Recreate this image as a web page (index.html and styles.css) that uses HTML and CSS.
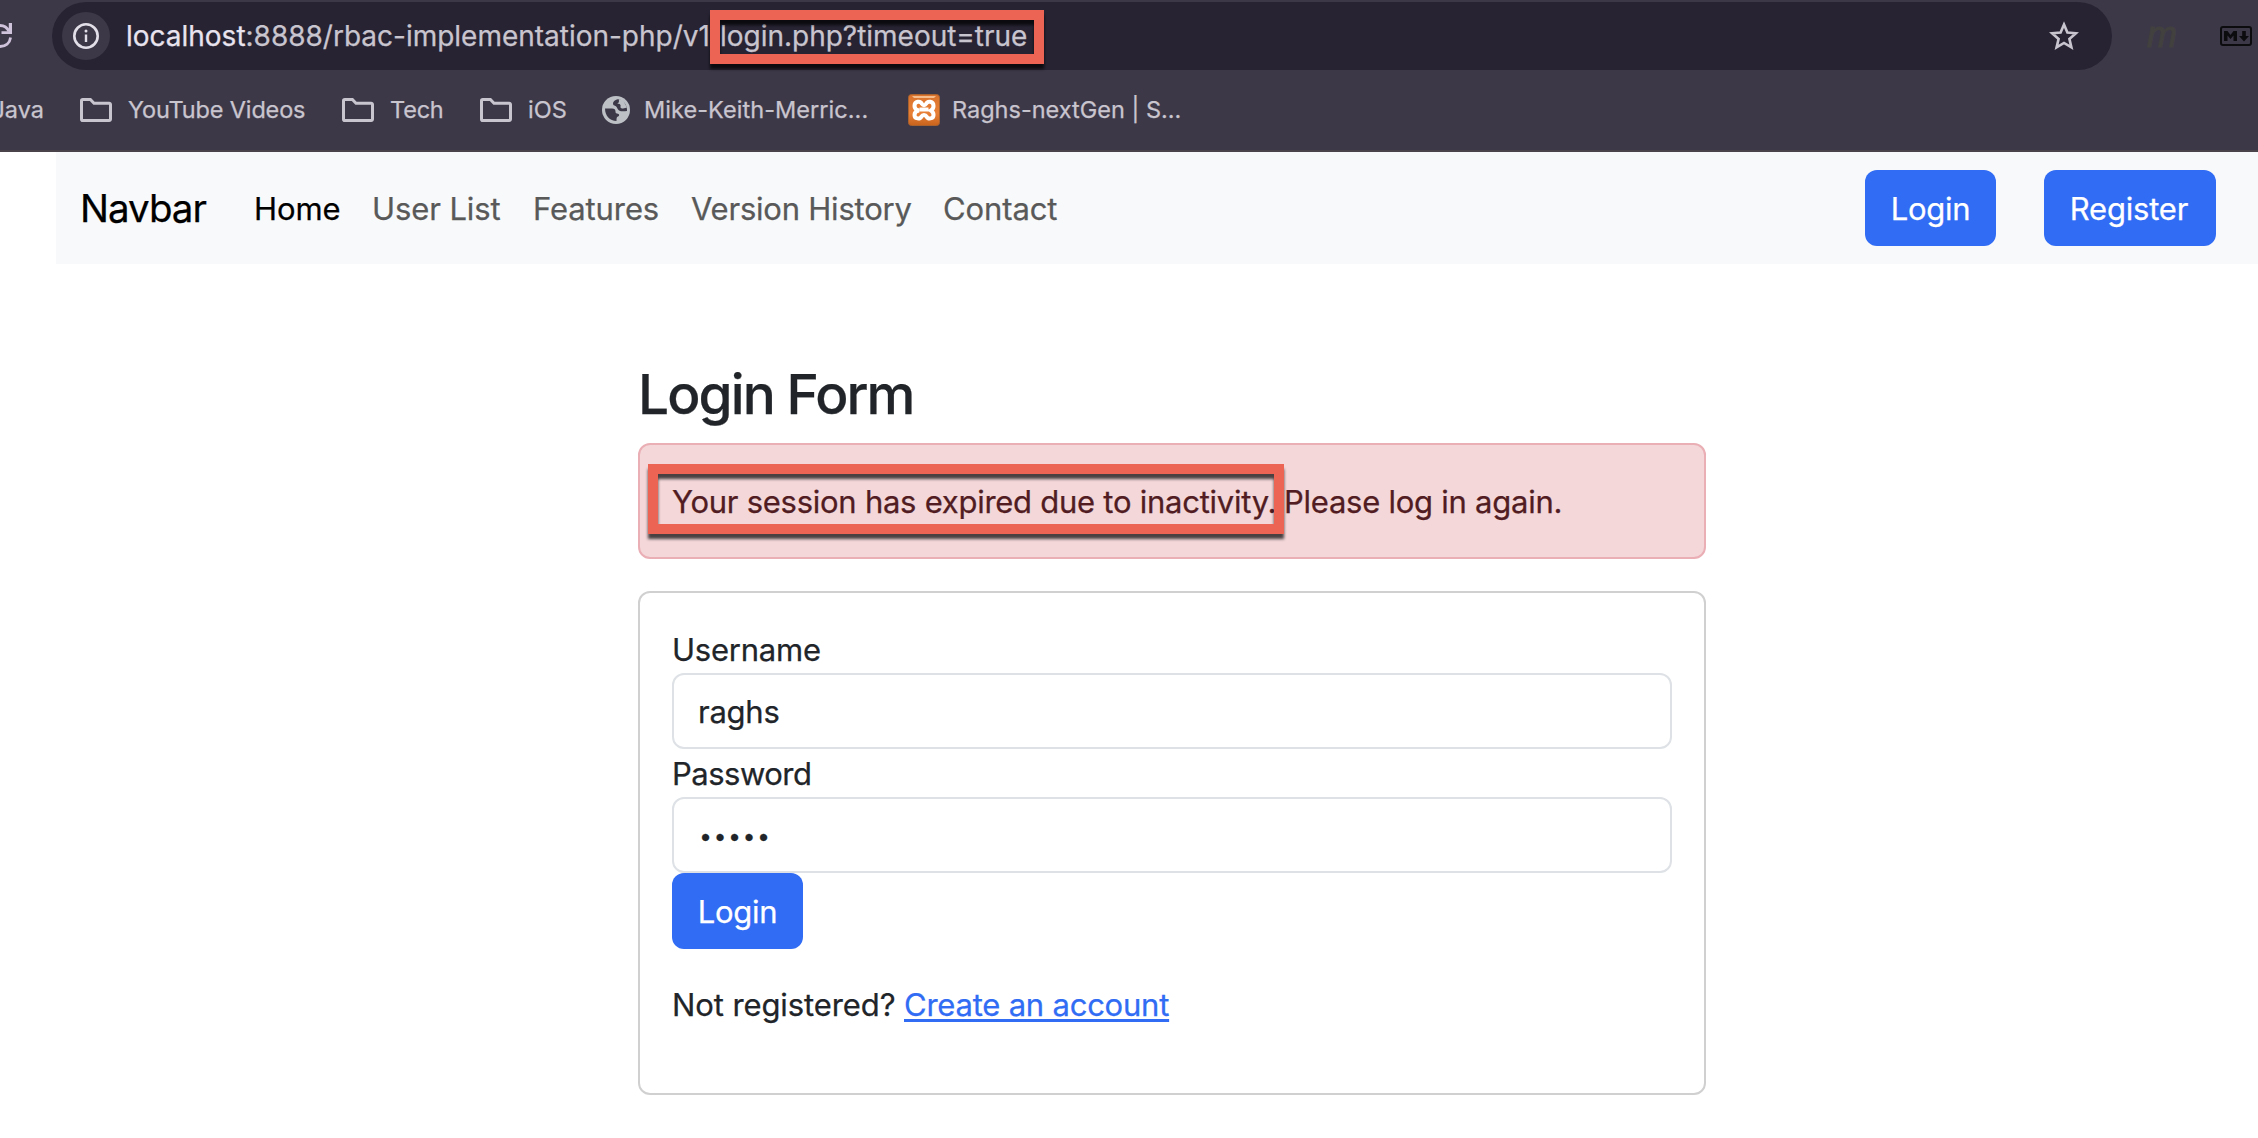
FILE: index.html
```html
<!DOCTYPE html>
<html lang="en">
<head>
<meta charset="utf-8">
<title>Login Form</title>
<link rel="stylesheet" href="styles.css">
</head>
<body>
<header class="browser">
  <div class="toolbar">
    <svg class="reload" viewBox="0 0 14 26"><path d="M0 2.5C4 2.5 7.500 5 9 8.500M0 23.500C5.500 23.500 9.800 20 10.600 14.500" fill="none" stroke="#cfc3dc" stroke-width="2.800"/><path d="M12 0v11H1.500V8.200h7.300V0z" fill="#cfc3dc"/></svg>
    <div class="omnibox">
      <span class="site-info"><svg viewBox="0 0 26 26"><circle cx="13" cy="13" r="11.700" fill="none" stroke="#e3dfe8" stroke-width="2.600"/><path d="M13 11.500v7.500" stroke="#e3dfe8" stroke-width="2.400"/><circle cx="13" cy="8" r="1.500" fill="#e3dfe8"/></svg></span>
      <span class="url"><span class="host">localhost</span><span class="path">:8888/rbac-implementation-php/v1/</span><span class="page">login.php?timeout=true</span></span>
      <svg class="star" viewBox="0 0 30 30"><path d="M15 3.500l3.400 8 8.600.7-6.600 5.700 2 8.500-7.400-4.500-7.400 4.500 2-8.500L3 12.200l8.600-.7z" fill="none" stroke="#c9c5cf" stroke-width="2.600"/></svg>
    </div>
    <span class="ext-m">m</span>
    <svg class="ext-md" viewBox="0 0 32 20"><rect x="1" y="1" width="30" height="18" rx="2" fill="none" stroke="#0c0b0e" stroke-width="2"/><path d="M4 15V5h3.500L10.500 9l3-4H17v10h-3.500V9.500l-3 3.500-3-3.500V15zM22.200 5h3.600v5H29l-5 5.500-5-5.500h3.200z" fill="#0c0b0e"/></svg>
    <i class="mark mark-url"></i>
  </div>
  <nav class="bookmarks">
    <span class="bm java">Java</span>
    <span class="bm bm-yt"><svg class="folder" viewBox="0 0 32 24"><path d="M2.800 1.500h7.600L14 5.200h15.200a1.300 1.300 0 0 1 1.300 1.300v14.700a1.300 1.300 0 0 1-1.300 1.300H2.800a1.300 1.300 0 0 1-1.300-1.300V2.800a1.300 1.300 0 0 1 1.300-1.300z"/></svg><span class="t">YouTube Videos</span></span>
    <span class="bm bm-tech"><svg class="folder" viewBox="0 0 32 24"><path d="M2.800 1.500h7.600L14 5.200h15.200a1.300 1.300 0 0 1 1.300 1.300v14.700a1.300 1.300 0 0 1-1.300 1.300H2.800a1.300 1.300 0 0 1-1.300-1.300V2.800a1.300 1.300 0 0 1 1.300-1.300z"/></svg><span class="t">Tech</span></span>
    <span class="bm bm-ios"><svg class="folder" viewBox="0 0 32 24"><path d="M2.800 1.500h7.600L14 5.200h15.200a1.300 1.300 0 0 1 1.300 1.300v14.700a1.300 1.300 0 0 1-1.300 1.300H2.800a1.300 1.300 0 0 1-1.300-1.300V2.800a1.300 1.300 0 0 1 1.300-1.300z"/></svg><span class="t">iOS</span></span>
    <span class="bm bm-mike"><svg class="globe" viewBox="0 0 28 28"><circle cx="14" cy="14" r="14" fill="#bdc1c6"/><path d="M16.500 3C13 3.500 11 5.500 11 7.500c0 1.500 1 2 2.500 2.500 1.500.4 1.500 3 3.500 4.500 2 1 4.500 1 8 .5.500-5.500-3-10.500-8.500-12zM3 12.500h7c2.500 0 3.500 1 3.500 3s1 2 2.500 2.200c1.500.3 1.500 2.300 0 2.800-1.500.5-1.500 2-1.500 4.500C8 25 3 20 3 12.500z" fill="#3d3848"/><path d="M16.500 3c1 2 .5 4-1.500 5 3-1 4 1 3.500 2.500-.4 1.500 1 2 2.500 2 1.500-.2 3-.5 4-1L21 4z" fill="#bdc1c6"/></svg><span class="t">Mike-Keith-Merric...</span></span>
    <span class="bm bm-raghs"><svg class="xampp" viewBox="0 0 32 32"><defs><linearGradient id="o" x2="0" y2="1"><stop stop-color="#d9722c"/><stop offset=".6" stop-color="#e98037"/><stop offset="1" stop-color="#c9631c"/></linearGradient></defs><rect x=".5" y=".5" width="31" height="31" rx="3" fill="url(#o)" stroke="#a9612d"/><path d="M4 2h24l-2 2H6z" fill="#f6bd8c"/><path d="M11 16.500C8 16 6.500 14.500 6.500 12c0-5 6-5.500 7.500-2 1 1.500 3 1.500 4 0 1.500-3.500 7.500-3 7.500 2 0 2.500-1 3.500-2.500 4.500 1.500 1 2.500 2 2.500 4.500 0 4-5.500 4.500-7 1.500-1-2-4-2-5 0-1.500 3-7 2.500-7-1.500 0-2.500 1.500-4 4.500-4.500zM11.500 15.500h9" fill="none" stroke="#fff" stroke-width="4"/></svg><span class="t">Raghs-nextGen | S...</span></span>
  </nav>
</header>
<nav class="navbar">
  <a class="brand">Navbar</a>
  <a class="link l1 active">Home</a><a class="link l2">User List</a><a class="link l3">Features</a><a class="link l4">Version History</a><a class="link l5">Contact</a>
  <a class="btn nav-login"><span>Login</span></a><a class="btn nav-register"><span>Register</span></a>
</nav>
<main class="content">
  <h1>Login Form</h1>
  <div class="alert"><span class="expired">Your session has expired due to inactivity.</span><span class="again">Please log in again.</span><i class="mark mark-alert"></i></div>
  <form class="card">
    <label class="lu">Username</label>
    <input class="field" type="text" value="raghs">
    <label class="lp">Password</label>
    <input class="field password" type="password" value="12345">
    <button class="btn submit" type="button"><span>Login</span></button>
    <p class="signup"><span class="q">Not registered?</span><a>Create an account</a></p>
  </form>
</main>
</body>
</html>
```
FILE: styles.css
```css
* { box-sizing: border-box; }
body { margin: 0; width: 2258px; height: 1138px; overflow: hidden; background: #fff; color: #212529; font: 31px/48px Inter, "Liberation Sans", sans-serif; letter-spacing: -.22px; -webkit-text-stroke: .25px; }
.browser { height: 152px; background: #3d3848; border-bottom: 2px solid #4a4349; overflow: hidden; letter-spacing: 0; }
.toolbar { position: relative; height: 72px; padding-top: 0; display: flex; align-items: center; }
.reload { width: 14px; height: 26px; flex: none; }
.omnibox { margin-left: 38px; width: 2060px; height: 68px; border-radius: 34px; background: #272333; display: flex; align-items: center; padding: 0 33px 0 10px; }
.site-info { width: 48px; height: 48px; border-radius: 50%; background: #3d3848; display: flex; align-items: center; justify-content: center; }
.site-info svg { width: 26px; height: 26px; }
.url { margin-left: 16px; flex: 1; display: flex; font-size: 28px; letter-spacing: -.01px; color: #c9c5cf; white-space: nowrap; padding-bottom: 1px; }
.host { color: #e8e3ee; }
.star { width: 30px; height: 30px; }
.ext-m { margin-left: 35px; width: 33px; padding-bottom: 2px; font: italic 36px/48px "Liberation Sans", sans-serif; color: #42413f; -webkit-text-stroke: 1px #42413f; }
.ext-md { margin-left: 40px; width: 32px; height: 20px; }
.mark { position: absolute; border: 10px solid #ec6453; filter: drop-shadow(0 5px 1.500px rgba(0, 0, 0, .7)); }
.mark-url { left: 710px; top: 10px; width: 334px; height: 54px; }
.mark-alert { left: 8px; top: 19px; width: 636px; height: 70px; }
.bookmarks { height: 76px; display: flex; align-items: center; font-size: 23.500px; color: #c9c5cf; white-space: nowrap; }
.bm { display: flex; align-items: center; flex: none; }
.java { width: 44px; justify-content: flex-end; margin-right: 36px; }
.folder { width: 32px; height: 24px; fill: none; stroke: #c9c5cf; stroke-width: 3; margin-right: 16px; }
.bm-yt { width: 262px; letter-spacing: -.15px; }
.bm-tech { width: 138px; letter-spacing: -.2px; }
.bm-ios { width: 122px; }
.bm-mike { width: 306px; letter-spacing: .05px; }
.globe { width: 28px; height: 28px; margin-right: 14px; }
.xampp { width: 32px; height: 32px; margin-right: 12px; }
.navbar { margin-left: 56px; height: 112px; padding: 0 42px 0 24px; background: #f8f9fa; display: flex; align-items: center; white-space: nowrap; }
.brand { width: 174px; font-size: 38.500px; letter-spacing: -1px; color: #000; }
.link { color: #595959; padding-top: 1px; letter-spacing: -.1px; }
.active { color: #000; }
.l1 { width: 118px; } .l2 { width: 161px; } .l3 { width: 158px; } .l4 { width: 252px; letter-spacing: -.22px; } .l5 { width: 140px; }
.btn { height: 76px; border: 0; border-radius: 12px; background: #316cf4; color: #fff; font: inherit; letter-spacing: -.3px; display: flex; align-items: center; justify-content: center; padding: 1px 0 0; }
.nav-login { width: 131px; margin-left: auto; }
.nav-register { width: 172px; margin-left: 48px; padding-right: 2px; letter-spacing: -.2px; }
.content { width: 1068px; margin-left: 638px; padding-top: 95px; }
h1 { margin: 0 0 14px; font-size: 55px; line-height: 70px; font-weight: 540; letter-spacing: -1.900px; }
.alert { position: relative; height: 116px; border: 2px solid #eaaeb5; border-radius: 12px; background: #f3d7d9; color: #511c22; padding: 33px 32px 31px; display: flex; white-space: nowrap; }
.expired { width: 612px; letter-spacing: -.26px; }
.again { letter-spacing: -.25px; }
.card { margin-top: 32px; height: 504px; border: 2px solid #d0d0d0; border-radius: 12px; padding: 32px; display: flex; flex-direction: column; }
label { height: 48px; padding-top: 1px; }
.lp { letter-spacing: -.5px; }
.field { height: 76px; width: 1000px; border: 2px solid #dee2e6; border-radius: 12px; padding: 0 24px; font: inherit; letter-spacing: -.25px; color: inherit; background: #fff; }
.password { padding: 5px 27px 0; font: 26px "Liberation Sans", sans-serif; letter-spacing: 5.400px; }
.submit { width: 131px; }
.signup { margin: 32px 0 0; display: flex; }
.signup .q { width: 232px; letter-spacing: -.1px; }
.signup a { color: #316cf4; text-decoration: underline; text-decoration-thickness: 3px; text-underline-offset: 3px; }
```
